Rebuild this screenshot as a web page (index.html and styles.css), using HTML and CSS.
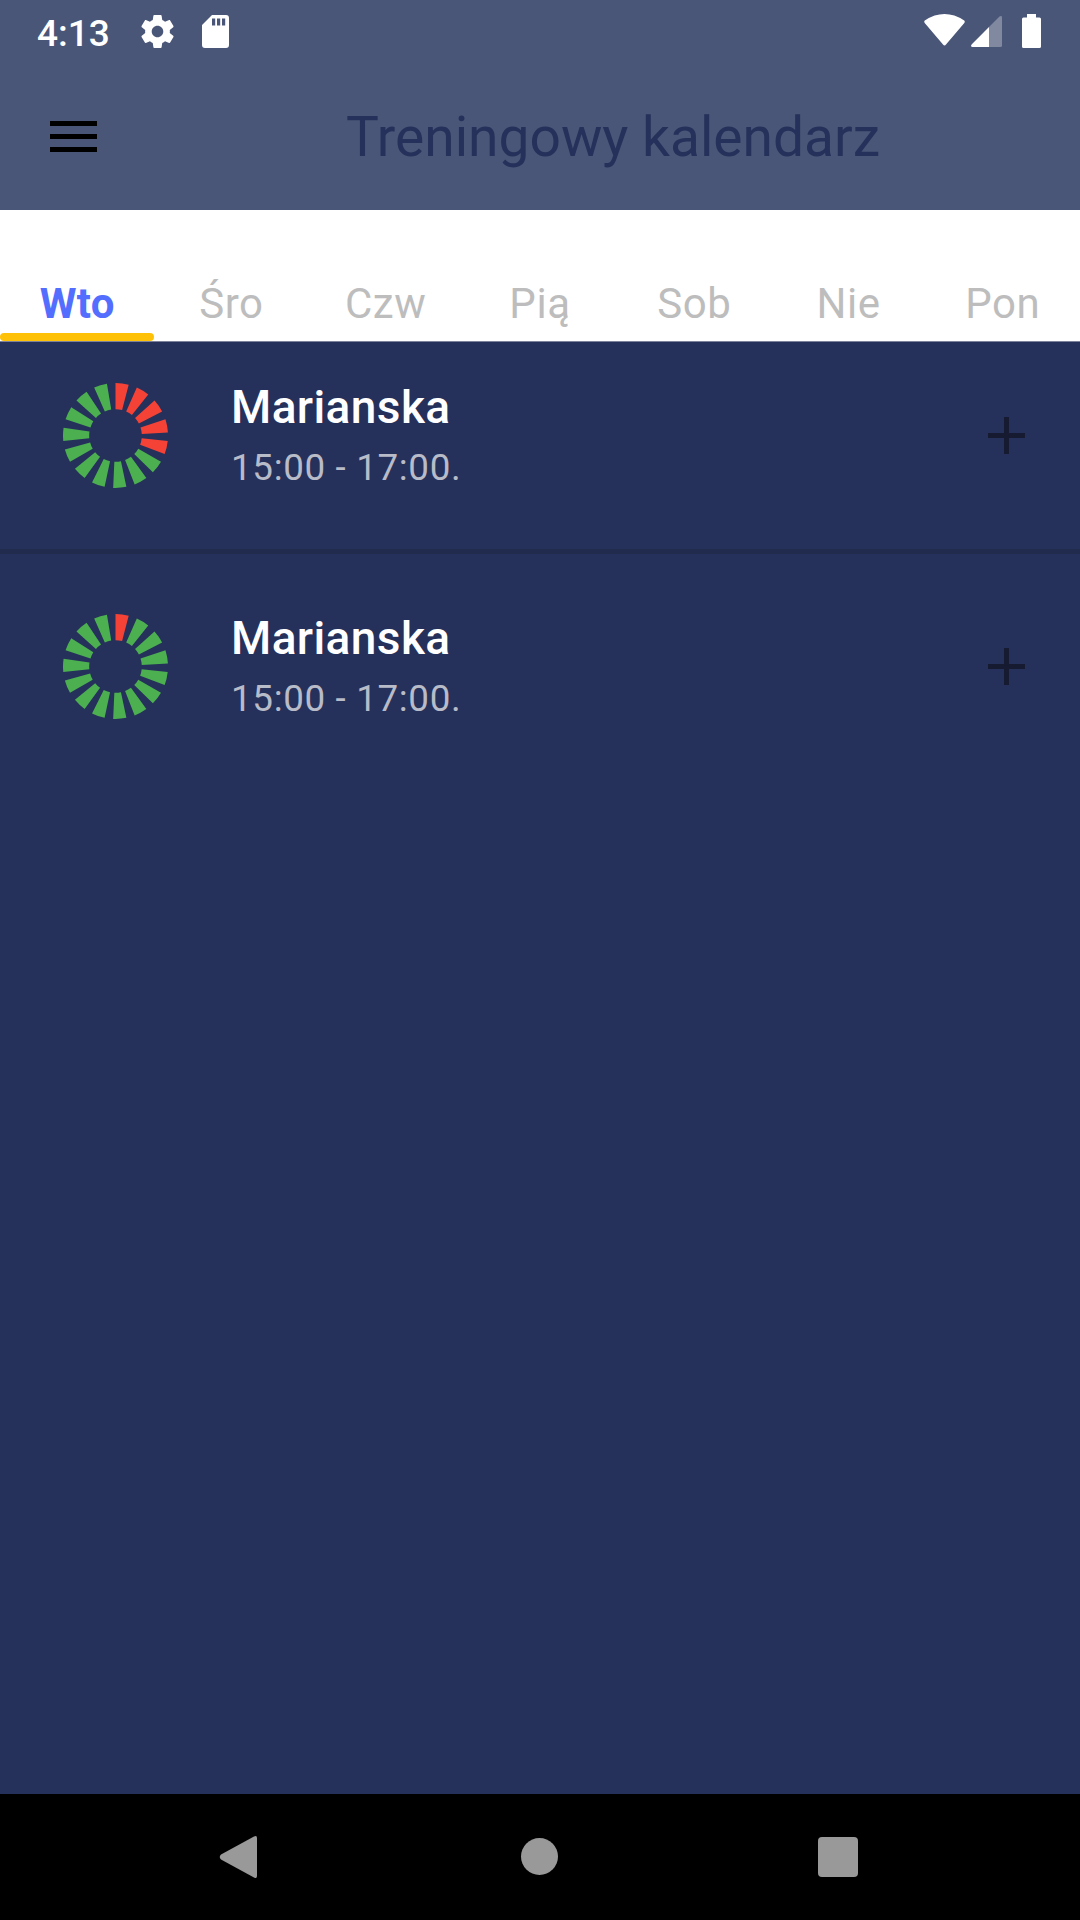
FILE: index.html
```html
<!DOCTYPE html>
<html lang="pl">

<head>
    <meta charset="utf-8" />
    <title>Treningowy kalendarz</title>
    <link rel="stylesheet" href="styles.css">
</head>

<body>
    <header class="header">
        <div class="status">
            <span class="clock">4:13</span>
            <svg class="gear" viewBox="2 2 20 20" width="33" height="33">
                <path d="M19.43 12.98c.04-.32.07-.64.07-.98s-.03-.66-.07-.98l2.11-1.65c.19-.15.24-.42.12-.64l-2-3.46c-.12-.22-.39-.3-.61-.22l-2.49 1c-.52-.4-1.08-.73-1.69-.98l-.38-2.65C14.46 2.18 14.25 2 14 2h-4c-.25 0-.46.18-.49.42l-.38 2.65c-.61.25-1.17.59-1.69.98l-2.49-1c-.23-.09-.49 0-.61.22l-2 3.46c-.13.22-.07.49.12.64l2.11 1.65c-.04.32-.07.65-.07.98s.03.66.07.98l-2.11 1.65c-.19.15-.24.42-.12.64l2 3.46c.12.22.39.3.61.22l2.49-1c.52.4 1.08.73 1.69.98l.38 2.65c.03.24.24.42.49.42h4c.25 0 .46-.18.49-.42l.38-2.65c.61-.25 1.17-.59 1.69-.98l2.49 1c.23.09.49 0 .61-.22l2-3.46c.12-.22.07-.49-.12-.64l-2.11-1.65zM12 15.5c-1.93 0-3.5-1.57-3.5-3.5s1.57-3.5 3.5-3.5 3.5 1.57 3.5 3.5-1.57 3.5-3.5 3.5z" />
            </svg>
            <svg class="card" viewBox="0 0 27 33" width="27" height="33">
                <path fill-rule="evenodd" d="M10 0H24Q27 0 27 3V30Q27 33 24 33H3Q0 33 0 30V10ZM10 3.5V10.5H13.2V3.5ZM15 3.5V10.5H18.2V3.5ZM20 3.5V10.5H23.2V3.5Z" />
            </svg>
            <svg class="wifi" viewBox="0 0 41 32" width="41" height="32">
                <path d="M.8 6.5Q20.5-6.3 40.2 6.5Q41.3 7.6 40.3 9L22 30.6Q20.5 32.4 19 30.6L.7 9Q-.3 7.6 .8 6.5Z" />
            </svg>
            <svg class="signal" viewBox="0 0 31 31" width="31" height="31">
                <path opacity=".3" d="M18 11L28.500.5Q31-.8 31 1.500V29.500Q31 31 29.500 31H18Z" />
                <path d="M18 11V31H1.500Q-.8 31 .6 28.500Z" />
            </svg>
            <svg class="battery" viewBox="0 0 19 34" width="19" height="34">
                <path d="M5 0H14V3.500H17.500Q19 3.500 19 5V32.500Q19 34 17.500 34H1.500Q0 34 0 32.500V5Q0 3.500 1.500 3.500H5Z" />
            </svg>
        </div>
        <div class="toolbar">
            <div class="menu"><i></i><i></i><i></i></div>
            <h1 class="title">Treningowy kalendarz</h1>
        </div>
    </header>

    <ul class="days">
        <li class="current">Wto</li>
        <li>Śro</li>
        <li>Czw</li>
        <li>Pią</li>
        <li>Sob</li>
        <li>Nie</li>
        <li>Pon</li>
    </ul>

    <main class="list">
        <div class="item">
            <svg class="ring" viewBox="0 0 105 105" width="105" height="105">
                <g transform="rotate(-90 52.5 52.5)">
                    <circle class="busy" cx="52.5" cy="52.5" r="39.4" pathLength="360" stroke-dasharray="14.6 9.4 14.6 9.4 14.6 9.4 14.6 9.4 14.6 300" />
                    <circle class="free" cx="52.5" cy="52.5" r="39.4" pathLength="360" stroke-dasharray="0 120 14.6 9.4 14.6 9.4 14.6 9.4 14.6 9.4 14.6 9.4 14.6 9.4 14.6 9.4 14.6 9.4 14.6 9.4 14.6 9.4" />
                </g>
            </svg>
            <div class="info">
                <h2>Marianska</h2>
                <p>15:00 - 17:00.</p>
            </div>
            <svg class="plus" viewBox="0 0 37 37" width="37" height="37">
                <path d="M16 0h5v16h16v5h-16v16h-5v-16h-16v-5h16z" />
            </svg>
        </div>
        <hr class="divider" />
        <div class="item">
            <svg class="ring" viewBox="0 0 105 105" width="105" height="105">
                <g transform="rotate(-90 52.5 52.5)">
                    <circle class="busy" cx="52.5" cy="52.5" r="39.4" pathLength="360" stroke-dasharray="14.6 400" />
                    <circle class="free" cx="52.5" cy="52.5" r="39.4" pathLength="360" stroke-dasharray="0 24 14.6 9.4 14.6 9.4 14.6 9.4 14.6 9.4 14.6 9.4 14.6 9.4 14.6 9.4 14.6 9.4 14.6 9.4 14.6 9.4 14.6 9.4 14.6 9.4 14.6 9.4 14.6 9.4" />
                </g>
            </svg>
            <div class="info">
                <h2>Marianska</h2>
                <p>15:00 - 17:00.</p>
            </div>
            <svg class="plus" viewBox="0 0 37 37" width="37" height="37">
                <path d="M16 0h5v16h16v5h-16v16h-5v-16h-16v-5h16z" />
            </svg>
        </div>
    </main>

    <nav class="navbar">
        <svg viewBox="0 0 42 44" width="42" height="44">
            <path d="M36 1.500Q39 0 39 3V41Q39 44 36 42.500L3 24.500Q.5 22 3 19.500Z" />
        </svg>
        <svg viewBox="0 0 38 38" width="38" height="38">
            <circle cx="19.500" cy="18.500" r="18.500" />
        </svg>
        <svg viewBox="0 0 40 40" width="40" height="40">
            <rect width="40" height="40" rx="4" />
        </svg>
    </nav>
</body>

</html>
```
FILE: styles.css
```css
body,
h1,
h2,
p,
ul,
li
{
    margin: 0;
    padding: 0;
}

ul
{
    list-style-type: none;
}

svg
{
    display: block;
    flex: none;
}

body
{
    display: flex;
    flex-direction: column;
    height: 1920px;
    background: #25315a;
    font-family: Roboto, sans-serif;
    overflow: hidden;
}

/* header */
.header
{
    height: 210px;
    background: #4a5678;
}

.status
{
    display: flex;
    align-items: flex-start;
    box-sizing: border-box;
    height: 63px;
    padding: 14px 39px 0 37px;
    fill: #fff;
}

.clock
{
    width: 103.5px;
    color: #fff;
    font-size: 37px;
    font-weight: 500;
    line-height: 40px;
}

.gear
{
    margin-top: 1px;
}

.card
{
    margin: 1px auto 0 28px;
}

.signal
{
    margin: 2px 20px 0 6px;
}

.toolbar
{
    display: flex;
    align-items: center;
    height: 147px;
    padding-left: 50px;
}

.menu
{
    display: flex;
    flex-direction: column;
    gap: 8px;
    width: 47px;
}

    .menu i
    {
        height: 5px;
        background: #000;
    }

.title
{
    margin-left: 249px;
    color: #25315a;
    font-size: 55.125px;
    font-weight: 400;
    line-height: 64px;
    white-space: nowrap;
}

/* days of the week */
.days
{
    display: flex;
    height: 132px;
    background: #fff;
}

    .days li
    {
        flex: 1;
        box-sizing: border-box;
        padding-top: 69px;
        border-bottom: 1px solid #7c839b;
        color: #bdbdbd;
        font-size: 42px;
        line-height: 50px;
        letter-spacing: .6px;
        text-align: center;
    }

        .days li.current
        {
            display: flex;
            flex-direction: column;
            justify-content: space-between;
            color: #536dfe;
            font-weight: 700;
            letter-spacing: .3px;
        }

            .days li.current::after
            {
                content: "";
                height: 8px;
                margin-top: -4px;
                border-radius: 4px;
                background: #ffc107;
            }

/* trainings */
.list
{
    flex: 1;
    margin-top: -1px;
}

.item
{
    display: flex;
    align-items: center;
    height: 189px;
    padding: 0 55px 0 63px;
}

.ring
{
    fill: none;
    stroke-width: 26.2;
}

.busy
{
    stroke: #f44336;
}

.free
{
    stroke: #4caf50;
}

.info
{
    flex: 1;
    margin-left: 63px;
    padding-top: 3px;
}

    .info h2
    {
        color: #fff;
        font-size: 46px;
        font-weight: 500;
        line-height: 60px;
        letter-spacing: .4px;
    }

    .info p
    {
        padding: 1px 0;
        color: #b8bbc8;
        font-size: 36.75px;
        line-height: 59px;
        letter-spacing: .66px;
    }

.plus
{
    fill: #161b31;
}

.divider
{
    height: 5px;
    margin: 19px 0 18px;
    border: 0;
    background: #212b4e;
}

/* system buttons */
.navbar
{
    display: flex;
    justify-content: space-between;
    align-items: center;
    box-sizing: border-box;
    height: 126px;
    padding: 0 222px 0 218px;
    background: #000;
    fill: #999;
}
```
